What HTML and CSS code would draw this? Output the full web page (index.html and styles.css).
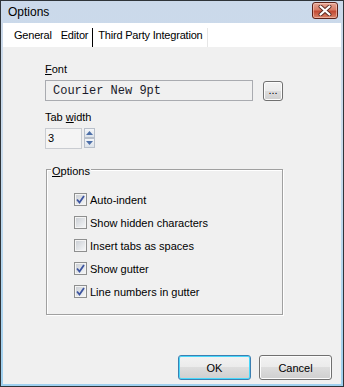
FILE: index.html
```html
<!DOCTYPE html>
<html lang="en">
<head>
    <meta charset="UTF-8">
    <title>Options</title>
    <link rel="stylesheet" href="styles.css">
</head>
<body>
    <div class="window">
        <div class="titlebar">
            <span class="title">Options</span>
            <span class="close">
                <svg width="14" height="11" viewBox="0 0 14 11">
                    <path d="M2.5 1.5 L11.5 9.5 M11.5 1.5 L2.5 9.5" stroke="#5a2a22" stroke-width="4" stroke-linecap="round"/>
                    <path d="M2.5 1.5 L11.5 9.5 M11.5 1.5 L2.5 9.5" stroke="#fff" stroke-width="2.2" stroke-linecap="round"/>
                </svg>
            </span>
        </div>
        <div class="frame">
            <div class="tabs">
                <span class="tab">General</span>
                <span class="tab selected">Editor</span>
                <span class="tab last">Third Party Integration</span>
            </div>
            <div class="client">
                <div class="lbl"><u>F</u>ont</div>
                <div class="font-row">
                    <div class="font-box">Courier New 9pt</div>
                    <button class="dots">...</button>
                </div>

                <div class="lbl tab-lbl">Tab <u>w</u>idth</div>
                <div class="spin-row">
                    <div class="spin-box">3</div>
                    <div class="spin-btns">
                        <span class="spin-btn">
                            <svg width="7" height="4" viewBox="0 0 7 4"><path d="M0 4 L3.5 0 L7 4 Z" fill="#4d6fa8"/></svg>
                        </span>
                        <span class="spin-btn">
                            <svg width="7" height="4" viewBox="0 0 7 4"><path d="M0 0 L3.5 4 L7 0 Z" fill="#4d6fa8"/></svg>
                        </span>
                    </div>
                </div>

                <div class="group">
                    <div class="legend"><u>O</u>ptions</div>
                    <div class="rows">
                        <div class="row"><span class="check on"></span>Auto-indent</div>
                        <div class="row"><span class="check"></span>Show hidden characters</div>
                        <div class="row"><span class="check"></span>Insert tabs as spaces</div>
                        <div class="row"><span class="check on"></span>Show gutter</div>
                        <div class="row"><span class="check on"></span>Line numbers in gutter</div>
                    </div>
                </div>

                <div class="buttons">
                    <button class="btn default">OK</button>
                    <button class="btn">Cancel</button>
                </div>
            </div>
        </div>
    </div>
</body>
</html>
```

FILE: styles.css
```css
body {
    margin: 0;
    font-family: "Liberation Sans", Arial, sans-serif;
    font-size: 11px;
    color: #000;
    background: #fff;
}

.window {
    width: 344px;
    height: 387px;
    box-sizing: border-box;
    border: 1px solid #2f3439;
    background: linear-gradient(#cbd9ea, #c9dbec 40%, #9fd0ef);
    display: flex;
    flex-direction: column;
}

.titlebar {
    height: 22px;
    display: flex;
    padding-left: 7px;
}

.title {
    font-size: 12px;
    line-height: 15px;
    margin-top: 4px;
}

.close {
    margin: 1px 5px 0 auto;
    width: 26px;
    height: 17px;
    box-sizing: border-box;
    border: 1px solid #5b2118;
    border-radius: 3px;
    background: linear-gradient(#e6a796, #d77c66 45%, #c24a33 55%, #d9846a);
    box-shadow: inset 0 0 0 1px rgba(255, 220, 210, 0.5);
    display: flex;
    align-items: center;
    justify-content: center;
}

.frame {
    flex: 1;
    margin: 0 2px 2px;
    display: flex;
    flex-direction: column;
}

.tabs {
    height: 24px;
    box-sizing: border-box;
    background: #fff;
    display: flex;
    padding: 5px 0 0 7px;
}

.tab {
    padding: 1px 4px 0;
    line-height: 13px;
    letter-spacing: -0.2px;
}

.tab.selected {
    border-right: 1px solid #000;
    padding-left: 5px;
}

.tab.last {
    border-right: 1px solid #e6e6e6;
    padding-left: 5px;
}

.client {
    flex: 1;
    background: #f0f0f0;
    display: flex;
    flex-direction: column;
    padding: 16px 0 4px 42px;
}

.lbl {
    line-height: 13px;
}

.tab-lbl {
    margin-top: 10px;
}

.font-row {
    display: flex;
    margin-top: 4px;
}

.font-box {
    width: 208px;
    height: 21px;
    box-sizing: border-box;
    border: 1px solid #a9abb0;
    padding: 2px 0 0 7px;
    font-family: "Liberation Mono", "Courier New", monospace;
    font-size: 12px;
    line-height: 17px;
    color: #1a1a2a;
}

.dots {
    margin: 1px 0 0 10px;
    width: 20px;
    height: 20px;
    padding: 0 0 2px;
    box-sizing: border-box;
    border: 1px solid #707070;
    border-radius: 3px;
    background: linear-gradient(#f2f2f2, #ebebeb 50%, #dddddd 50%, #cfcfcf);
    box-shadow: inset 0 0 0 1px #fcfcfc;
    font-family: inherit;
    font-size: 11px;
    line-height: 14px;
}

.spin-row {
    display: flex;
    margin-top: 4px;
}

.spin-box {
    width: 37px;
    height: 21px;
    box-sizing: border-box;
    border: 1px solid #c9ccd1;
    background: #f4f4f4;
    padding-left: 2px;
    line-height: 19px;
}

.spin-btns {
    display: flex;
    flex-direction: column;
    margin-left: 2px;
}

.spin-btn {
    width: 11px;
    height: 10px;
    box-sizing: border-box;
    border: 1px solid #b8bfca;
    background: linear-gradient(#f4f6f9, #dde3ea);
    display: flex;
    align-items: center;
    justify-content: center;
}

.group {
    margin: 20px 0 0 1px;
    width: 237px;
    height: 146px;
    box-sizing: border-box;
    border: 1px solid #a0a0a0;
    box-shadow: 1px 1px 0 #fff, inset 1px 1px 0 #fff;
    display: flex;
    flex-direction: column;
}

.legend {
    align-self: flex-start;
    margin: -5px 0 0 4px;
    padding: 0 1px;
    background: #f0f0f0;
    line-height: 13px;
}

.rows {
    margin-top: 10px;
    padding-left: 27px;
}

.row {
    height: 23px;
    display: flex;
    align-items: center;
    gap: 3px;
}

.check {
    width: 13px;
    height: 13px;
    box-sizing: border-box;
    border: 1px solid #8e8f8f;
    box-shadow: inset 0 0 0 1px #f4f4f4;
    background: linear-gradient(135deg, #c8ccd2, #eef0f2 80%, #fafafa);
    display: flex;
    align-items: center;
    justify-content: center;
}

.check.on::after {
    content: "";
    width: 9px;
    height: 9px;
    background: url("data:image/svg+xml,%3Csvg xmlns='http://www.w3.org/2000/svg' width='9' height='9' viewBox='0 0 9 9'%3E%3Cpath d='M1 4.5 L3.5 7.5 L8 1' fill='none' stroke='%233d55a0' stroke-width='1.8'/%3E%3C/svg%3E");
}

.buttons {
    margin-top: auto;
    display: flex;
    justify-content: flex-end;
    gap: 8px;
    padding-right: 9px;
}

.btn {
    width: 73px;
    height: 25px;
    box-sizing: border-box;
    border: 1px solid #707070;
    border-radius: 3px;
    background: linear-gradient(#f2f2f2, #ebebeb 50%, #dddddd 50%, #cfcfcf);
    box-shadow: inset 0 0 0 1px #fcfcfc;
    font-family: inherit;
    font-size: 11px;
    color: #000;
    padding: 0;
}

.btn.default {
    border-color: #3c7fb1;
    box-shadow: inset 0 0 0 1px #48d8fb;
}
```
